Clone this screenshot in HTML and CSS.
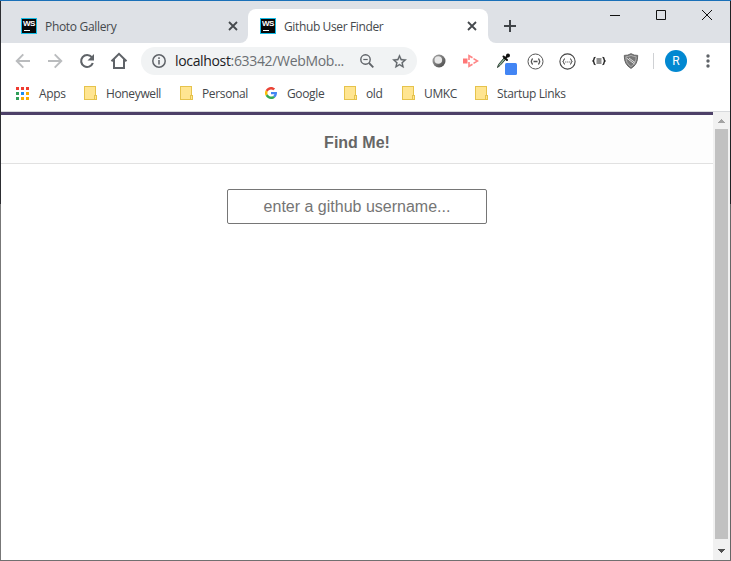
FILE: index.html
```html
<!DOCTYPE html>
<html lang="en">
<head>
<meta charset="utf-8">
<title>Github User Finder</title>
<link rel="stylesheet" href="styles.css">
</head>
<body>
<div class="window">
  <header class="tabs">
    <div class="tab first">
      <span class="ws"><b>WS</b><i></i></span><span class="title gallery">Photo Gallery</span>
      <svg class="close" width="10" height="10" viewBox="0 0 10 10"><path d="M1 1l8 8M9 1l-8 8"/></svg>
    </div>
    <div class="tab active">
      <span class="ws"><b>WS</b><i></i></span><span class="title">Github User Finder</span>
      <svg class="close" width="10" height="10" viewBox="0 0 10 10"><path d="M1 1l8 8M9 1l-8 8"/></svg>
    </div>
    <div class="after">
      <svg class="plus" width="12" height="12" viewBox="0 0 12 12"><path d="M6 0v12M0 6h12"/></svg>
    </div>
    <div class="controls">
      <svg width="10" height="10" viewBox="0 0 10 10"><path d="M0 5.5h10"/></svg>
      <svg width="10" height="10" viewBox="0 0 10 10"><path d="M.5.5h9v9h-9z"/></svg>
      <svg width="10" height="10" viewBox="0 0 10 10"><path d="M0 0l10 10M10 0L0 10"/></svg>
    </div>
  </header>
  <nav class="toolbar">
    <span class="cell"><svg width="16" height="16" viewBox="0 0 16 16" fill="none" stroke="#babcbe" stroke-width="1.9"><path d="M15 8H2M8.3 1.4L1.7 8l6.6 6.6"/></svg></span>
    <span class="cell"><svg width="16" height="16" viewBox="0 0 16 16" fill="none" stroke="#babcbe" stroke-width="1.9"><path d="M1 8h13M7.700 1.400L14.300 8l-6.600 6.600"/></svg></span>
    <span class="cell"><svg width="16" height="16" viewBox="0 0 16 16"><path d="M12.800 4.200A6 6 0 1 0 13.800 10" fill="none" stroke="#5f6368" stroke-width="2.100"/><path d="M15 1v6.500H8.500z" fill="#5f6368"/></svg></span>
    <span class="cell"><svg width="18" height="18" viewBox="0 0 18 18" fill="none" stroke="#5f6368" stroke-width="2"><path d="M1.500 9.300L9 1.800l7.500 7.500M4 7.500V16h10V7.500"/></svg></span>
    <div class="omnibox">
      <svg class="info" width="14" height="14" viewBox="0 0 14 14"><circle cx="7" cy="7" r="6.200" fill="none" stroke="#5f6368" stroke-width="1.500"/><path d="M7 6v4.600M7 3.300v1.600" stroke="#5f6368" stroke-width="1.500"/></svg>
      <span class="url"><em>localhost</em>:63342/WebMob...</span>
      <span class="cell zoom"><svg width="14" height="14" viewBox="0 0 14 14" fill="none" stroke="#5f6368" stroke-width="1.400"><circle cx="5.500" cy="5.500" r="4.700"/><path d="M9 9l4.300 4.300" stroke-width="1.800"/><path d="M3.300 5.500h4.400" stroke-width="1.200"/></svg></span>
      <span class="cell"><svg width="17" height="17" viewBox="0 0 24 24" fill="#5f6368" stroke="#5f6368" stroke-width=".4"><path d="M22 9.240l-7.190-.62L12 2 9.190 8.630 2 9.240l5.460 4.730L5.820 21 12 17.270 18.180 21l-1.630-7.030L22 9.240zM12 15.400l-3.760 2.270 1-4.280-3.320-2.880 4.380-.38L12 6.100l1.710 4.040 4.380.38-3.320 2.880 1 4.280L12 15.400z"/></svg></span>
    </div>
    <span class="cell ext"><svg width="14" height="14" viewBox="0 0 14 14"><defs><linearGradient id="ball" x1="0" y1="0" x2="1" y2="1"><stop offset="0" stop-color="#aaa"/><stop offset="1" stop-color="#444"/></linearGradient></defs><circle cx="7" cy="7" r="6.500" fill="url(#ball)"/><circle cx="6.300" cy="6" r="3.800" fill="#e8e8e8"/></svg></span>
    <span class="cell"><svg width="16" height="14" viewBox="0 0 16 14"><path d="M0 4.500h4.500v5H0z" fill="#ff7777"/><path d="M6 6V1.700l3.500 2M6 8v4.300l3.500-2M10.500 4.600L14.500 7l-4 2.400" fill="none" stroke="#ff8585" stroke-width="1.600"/></svg></span>
    <span class="cell"><svg width="28" height="28" viewBox="0 0 28 28"><path d="M8.500 20.500l1-3 5.500-6.500 1.500 1.500-5.500 6z" fill="#8fb69b" stroke="#2b3c31"/><path d="M14.500 9.500l3.500 3.500M16 11.500l3-3" stroke="#111" stroke-width="2" stroke-linecap="round"/><circle cx="19" cy="8.500" r="2" fill="#111"/><rect x="16" y="16" width="12" height="12" rx="1.500" fill="#4285f4"/></svg></span>
    <span class="cell"><svg width="17" height="17" viewBox="0 0 17 17" fill="none" stroke="#555"><circle cx="8.500" cy="8.500" r="7.500"/><path d="M6 5.800q-1.300 0-1.300 1.400 0 1.300-1 1.300 1 0 1 1.300 0 1.400 1.300 1.400M11 5.800q1.300 0 1.300 1.400 0 1.300 1 1.300-1 0-1 1.300 0 1.400-1.300 1.400M6.500 8.500h4" stroke-width="1.300"/></svg></span>
    <span class="cell"><svg width="17" height="17" viewBox="0 0 17 17" fill="none" stroke="#444"><circle cx="8.500" cy="8.500" r="7.600" stroke-width="1.100"/><path d="M6 5.800q-1.300 0-1.300 1.400 0 1.300-1 1.300 1 0 1 1.300 0 1.400 1.300 1.400M11 5.800q1.300 0 1.300 1.400 0 1.300 1 1.300-1 0-1 1.300 0 1.400-1.300 1.400"/><path d="M6.300 9h5" stroke-dasharray="1 1"/></svg></span>
    <span class="cell"><svg width="14" height="10" viewBox="0 0 14 12" preserveAspectRatio="none" fill="none" stroke="#222"><path d="M3.500 1.500Q2 1.500 2 3.500T.5 6Q2 6 2 8t1.500 2.500M10.500 1.500Q12 1.500 12 3.500T13.500 6Q12 6 12 8t-1.500 2.500" stroke-width="1.500"/><path d="M4.500 3.500h5M4.500 6h5M4.500 8.500h5" stroke-width="1.200"/></svg></span>
    <span class="cell"><svg width="16" height="16" viewBox="0 0 16 16"><path d="M8 .7q3.300 2 6.700 1.700Q15 11.500 8 15.400 1 11.500 1.300 2.400 4.700 2.700 8 .7z" fill="#777" stroke="#666"/><path d="M8 2.400q2.700 1.400 5.200 1.400-.1 6.500-5.200 9.800-5.100-3.300-5.200-9.800Q5.300 3.800 8 2.400z" fill="none" stroke="#bbb" stroke-width=".8"/><path d="M3.500 5l8 6M6 5l6 4.500" stroke="#ddd" stroke-width="1"/></svg></span>
    <span class="rule"></span>
    <span class="avatar">R</span>
    <svg class="dots" width="4" height="14" viewBox="0 0 4 14" fill="#5f6368"><circle cx="2" cy="2" r="1.700"/><circle cx="2" cy="7" r="1.700"/><circle cx="2" cy="12" r="1.700"/></svg>
  </nav>
  <nav class="bookmarks">
    <a class="apps"><svg width="13" height="13" viewBox="0 0 13 13"><path d="M0 0h3v3H0zM5 0h3v3H5zM10 0h3v3h-3z" fill="#ef3b30"/><path d="M0 5h3v3H0zM0 10h3v3H0z" fill="#2f9e58"/><path d="M5 5h3v3H5z" fill="#1a8cf0"/><path d="M10 5h3v3h-3zM5 10h3v3H5zM10 10h3v3h-3z" fill="#f9ab00"/></svg><span>Apps</span></a>
    <a><i class="folder"></i><span>Honeywell</span></a>
    <a><i class="folder"></i><span>Personal</span></a>
    <a><svg width="12" height="12" viewBox="4 4 40 40"><path fill="#4285f4" d="M43.600 20.500H24v8h11.300c-.8 2.200-2.200 4.200-4.100 5.600l6.200 5.200C37 39.200 44 34 44 24c0-1.300-.1-2.400-.4-3.500z"/><path fill="#ea4335" d="M6.300 14.700l6.600 4.800C14.700 15.100 19 12 24 12c3.100 0 5.800 1.200 8 3l5.700-5.700C34 6 29.300 4 24 4 16.300 4 9.700 8.300 6.300 14.700z"/><path fill="#fbbc05" d="M6.300 14.700A20 20 0 0 0 6.300 33.500l6.600-5.100a12 12 0 0 1 0-8.900z"/><path fill="#34a853" d="M24 44c5.200 0 9.900-2 13.400-5.200l-6.200-5.200A12 12 0 0 1 12.900 28.400l-6.600 5.100C9.700 39.600 16.300 44 24 44z"/></svg><span>Google</span></a>
    <a><i class="folder"></i><span>old</span></a>
    <a><i class="folder"></i><span>UMKC</span></a>
    <a><i class="folder"></i><span>Startup Links</span></a>
  </nav>
  <div class="viewport">
    <main class="page">
      <h1>Find Me!</h1>
      <input class="search" type="text" placeholder="enter a github username...">
    </main>
    <aside class="scroll">
      <svg width="7" height="4" viewBox="0 0 7 4"><path d="M3 0h1v1h1v1h1v1h1v1H0V3h1V2h1V1h1z" fill="#a3a3a3"/></svg>
      <span class="thumb"></span>
      <svg width="7" height="4" viewBox="0 0 7 4"><path d="M0 0h7v1H6v1H5v1H4v1H3V3H2V2H1V1H0z" fill="#505050"/></svg>
    </aside>
  </div>
</div>
</body>
</html>
```
FILE: styles.css
```css
*, *::after { box-sizing: border-box; }
body { margin: 0; background: #fff; font-family: "Open Sans", sans-serif; overflow: hidden; }
svg { display: block; flex: none; }
.window {
  width: 731px; height: 561px; display: flex; flex-direction: column;
  padding: 1px;
  background: linear-gradient(#1a70b8, #1a70b8) 0 0 / 100% 1px no-repeat,
    linear-gradient(#707070, #707070) 0 100% / 100% 1px no-repeat,
    linear-gradient(#2c2d31 204px, #777 204px) 0 0 / 1px 100% no-repeat,
    linear-gradient(#202225 204px, #666 204px) 100% 0 / 1px 100% no-repeat;
}
.tabs { height: 42px; background: #fff; display: flex; }
.tab { display: flex; align-items: center; height: 42px; padding-top: 8px; font-size: 12px; color: #45494d; }
.tab.first { width: 247px; padding: 8px 10px 0 20px; background: #dee1e6; border-bottom-right-radius: 8px; }
.tab.active {
  width: 240px; padding: 0 11px 0 12px; height: 34px; margin-top: 8px; border-radius: 8px 8px 0 0;
  background: #fff; box-shadow: 0 -8px 0 8px #dee1e6; clip-path: inset(-8px 0 0 0);
}
.after { flex: 1; background: #dee1e6; border-bottom-left-radius: 8px; padding: 19px 0 0 16px; }
.controls { display: flex; gap: 36px; background: #dee1e6; padding: 9px 18px 0 0; fill: none; stroke: #111; stroke-width: 1; }
.ws { width: 16px; height: 16px; background: #080808; border: 1px solid #16bce6; flex: none; display: flex; flex-direction: column; align-items: center; color: #fff; }
.ws b { font: bold 8px/10px "Liberation Sans", sans-serif; letter-spacing: -.5px; }
.ws i { width: 6px; height: 1px; background: #fff; margin: 1px 4px 0 0; }
.title { margin-left: 8px; letter-spacing: -.37px; flex: 1; white-space: nowrap; line-height: 16px; padding-top: 2px; }
.title.gallery { letter-spacing: -.32px; }
.close { stroke: #45494d; stroke-width: 1.8; fill: none; }
.plus { stroke: #3f4347; stroke-width: 2; }
.toolbar { height: 36px; display: flex; align-items: center; padding-left: 6px; background: #fff; }
.cell { width: 32px; height: 28px; display: flex; align-items: center; justify-content: center; flex: none; }
.omnibox { width: 276px; height: 28px; margin-left: 6px; border-radius: 14px; background: #f1f3f4; display: flex; align-items: center; padding: 0 2px 0 11px; }
.url { margin-left: 9px; flex: 1; font-size: 14px; line-height: 20px; letter-spacing: -.34px; color: #6b6f73; white-space: nowrap; }
.url em { font-style: normal; color: #202124; }
.ext { margin-left: 6px; }
.rule { width: 1px; height: 16px; background: #cfd1d4; margin-left: 6px; }
.avatar { width: 22px; height: 22px; border-radius: 50%; background: #0288d1; color: #fff; font: 12px/22px Roboto, sans-serif; text-align: center; margin-left: 11px; }
.dots { margin-left: 19px; }
.bookmarks { height: 33px; display: grid; grid-template-columns: 68px 96px 85px 79px 58px 73px 1fr; align-items: center; padding: 0 0 4px 15px; border-bottom: 1px solid #d7d9dc; background: #fff; font-size: 12px; line-height: 16px; letter-spacing: -.36px; color: #44474b; }
.bookmarks a { display: flex; align-items: center; gap: 10px; white-space: nowrap; }
.bookmarks span { padding-top: 1px; }
.folder { width: 12px; height: 14px; background: #ffe591; border: 1px solid #e6c34c; position: relative; flex: none; }
.folder::after { content: ""; position: absolute; right: -2px; bottom: -1px; width: 3px; height: 5px; border: 1px solid #e6c34c; background: #ffe591; }
.viewport { flex: 1; display: flex; }
.page { flex: 1; border-top: 3px solid #4d4068; background: #fff; font-family: "Liberation Sans", Arial, sans-serif; }
.page h1 { margin: 0; height: 49px; padding-top: 19px; font-size: 16px; line-height: 18px; text-align: center; background: #fdfdfd; border-bottom: 1px solid #e1e1e1; color: #666; }
.search { display: block; width: 260px; height: 35px; margin: 25px auto 0; padding: 0; border: 1px solid #767676; border-radius: 2px; text-align: center; font: 16px "Liberation Sans", Arial, sans-serif; background: #fff; }
.search::placeholder { color: #757575; opacity: 1; }
.scroll { width: 17px; background: #f1f1f1; display: flex; flex-direction: column; align-items: center; padding: 7px 0; }
.thumb { width: 13px; height: 410px; margin: 6px 0 10px; background: #c1c1c1; }
```
